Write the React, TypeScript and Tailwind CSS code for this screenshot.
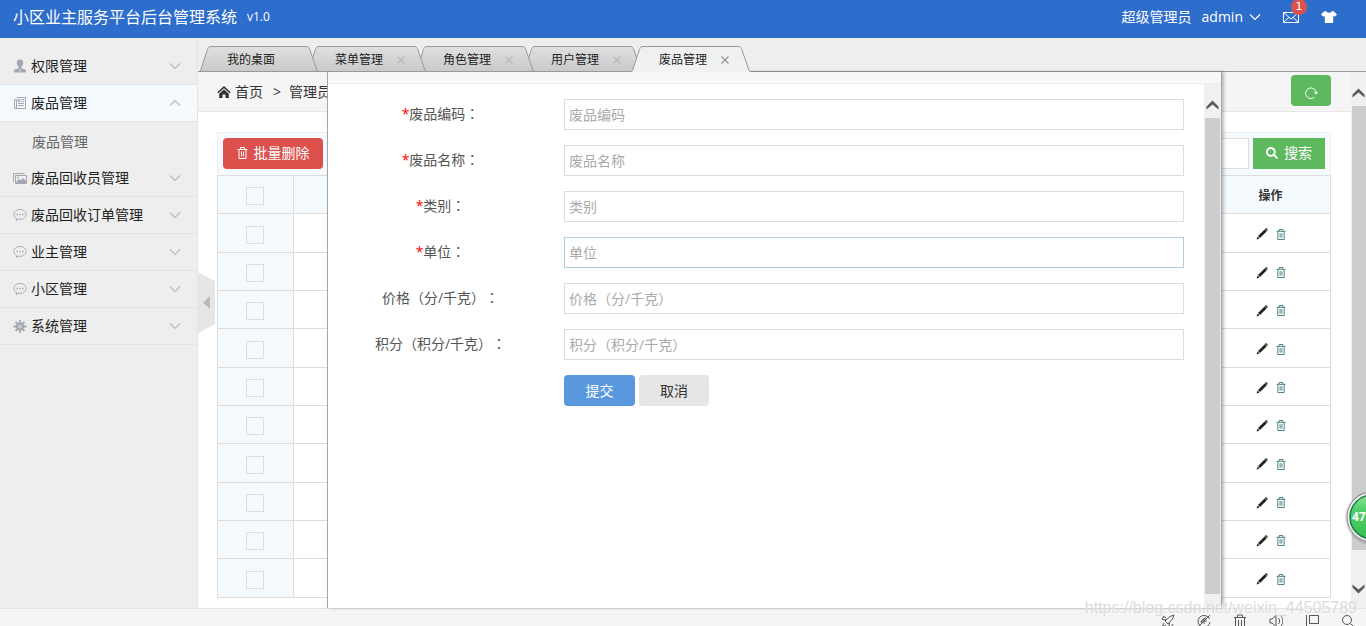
import { useState } from "react";
import type { ReactNode } from "react";
import { FaSearch } from "react-icons/fa";

type IconProps = { className?: string };

const UserIcon = () => (
  <svg viewBox="0 0 14 14" className="w-3.5 h-3.5" fill="#a2a7b0">
    <path d="M7 0.5c-2.3 0-3.3 1.5-3.2 3.4.1 1.500.7 3 1.700 3.900v1.400L2.200 10.200C1.400 10.500 1 11.200 1 12v1.500h12V12c0-.8-.4-1.500-1.200-1.800L8.500 9.200V7.800c1-.9 1.600-2.400 1.700-3.900C10.300 2 9.300.5 7 .5z" />
    <path d="M6.300 10h1.400l-.4 1.200.5 2.300H6.200l.5-2.300z" fill="#d9dbde" />
  </svg>
);

const NewsIcon = () => (
  <svg viewBox="0 0 14 14" className="w-3.5 h-3.5" fill="none" stroke="#a2a7b0">
    <path d="M3.500 1.500h9v11h-11v-9h2v9" />
    <path d="M5 3.500h2v2H5zM8.500 3.500H11M8.500 5.500H11M5 7.500h6M5 9.500h6" />
  </svg>
);

const ImageIcon = () => (
  <svg viewBox="0 0 14 14" className="w-3.5 h-3.5" fill="none" stroke="#a2a7b0">
    <path d="M0.500 11V2.500h11" />
    <path d="M2.500 4.500h11v8h-11z" />
    <path d="M3 12l3-3.500 1.500 1.500L10 7.500l3 3V12z" fill="#a2a7b0" />
    <circle cx="5" cy="6.500" r="0.600" />
  </svg>
);

const CommentIcon = () => (
  <svg viewBox="0 0 14 14" className="w-3.5 h-3.5" fill="none" stroke="#a6aab2">
    <path d="M7 1.500C3.500 1.500.900 3.700.900 6.400c0 1.700 1 3.200 2.600 4.100l-.3 2 2.300-1.300c.5.100 1 .1 1.500.1 3.500 0 6.100-2.200 6.100-4.900S10.500 1.500 7 1.500z" />
    <path d="M3.500 6.500h1.500M6.300 6.500h1.500M9.100 6.500h1.500" strokeWidth="1.400" />
  </svg>
);

const GearIcon = () => (
  <svg viewBox="0 0 14 14" className="w-3.5 h-3.5" fill="none" stroke="#a2a7b0">
    <circle cx="7" cy="7.500" r="3" strokeWidth="2.500" />
    <path d="M7 1v13M.500 7.500h13M2.500 3l9 9M11.500 3l-9 9" strokeWidth="1.800" strokeDasharray="2.600 7.800 2.600" />
    <circle cx="7" cy="7.500" r="0.700" strokeWidth="1" />
  </svg>
);

const Chevron = ({ className }: IconProps) => (
  <svg viewBox="0 0 12 8" className={`w-3 h-2 ${className ?? ""}`} fill="none" stroke="currentColor" strokeWidth="1.200">
    <path d="M1 1.500l5 5 5-5" />
  </svg>
);

const ScrollArrow = ({ className }: IconProps) => (
  <svg viewBox="0 0 13 10" className={`w-[13px] h-2.5 ${className ?? ""}`} fill="#5a5a5a">
    <path d="M6.500 0.500L12.500 6.500V9.500L6.500 4.500 .500 9.500V6.500z" />
  </svg>
);

const TrashIcon = ({ className }: IconProps) => (
  <svg viewBox="0 0 11 12" className={className} fill="none" stroke="currentColor">
    <path d="M0.500 2.500h10M3.500 2.500v-2h4v2M2 3v8.500h7V3M4.500 4.500v5M6.500 4.500v5" />
  </svg>
);

const PencilIcon = () => (
  <svg viewBox="0 0 12 12" className="w-3 h-3" fill="#222">
    <path d="M8.800 1.200L10.800 3.200 4 10 2 8zM9.400.600c.4-.4 1-.4 1.400 0l.6.6c.4.4.4 1 0 1.400l-.3.300-2-2zM1.600 8.500L3.500 10.400.500 11.500z" />
  </svg>
);

const HomeIcon = () => (
  <svg viewBox="0 0 14 12" className="w-3.5 h-3" fill="#333">
    <path d="M7 0L13.700 6.200 12.700 7.300 7 2.200 1.300 7.300.300 6.200z" />
    <path d="M7 3.500l4.800 4.300V12H8.500V8.500h-3V12H2.200V7.800z" />
  </svg>
);

const RefreshIcon = () => (
  <svg viewBox="0 0 14 14" className="w-3.5 h-3.5" fill="none" stroke="#fff">
    <path d="M10.500 11.200A5.300 5.300 0 1 1 12.200 6.500" />
    <path d="M10.300 6.200h3.400L12 8.300z" fill="#fff" strokeWidth="0.500" />
  </svg>
);

const MailIcon = () => (
  <svg viewBox="0 0 16 11" className="w-4 h-[11px]" fill="none" stroke="#fff">
    <path d="M.500.500h15v10H.500zM.500.500L8 7l7.500-6.500M.500 10.500L6 5.300M15.500 10.500L10 5.300" />
  </svg>
);

const ShirtIcon = () => (
  <svg viewBox="0 0 16 12" className="w-4 h-3" fill="#fff">
    <path d="M5 0c.5 1.200 1.600 1.800 3 1.800S10.500 1.200 11 0l2 .400L16 3.500 13.700 5.700 12.200 4.800V12H3.800V4.800L2.300 5.700 0 3.500 3 .400z" />
  </svg>
);

const menus: { name: string; icon: ReactNode; children?: string[] }[] = [
  { name: "权限管理", icon: <UserIcon /> },
  { name: "废品管理", icon: <NewsIcon />, children: ["废品管理"] },
  { name: "废品回收员管理", icon: <ImageIcon /> },
  { name: "废品回收订单管理", icon: <CommentIcon /> },
  { name: "业主管理", icon: <CommentIcon /> },
  { name: "小区管理", icon: <CommentIcon /> },
  { name: "系统管理", icon: <GearIcon /> },
];

const tabs = ["我的桌面", "菜单管理", "角色管理", "用户管理", "废品管理"];

const fields = [
  { id: "code", label: "废品编码", required: true },
  { id: "name", label: "废品名称", required: true },
  { id: "type", label: "类别", required: true },
  { id: "unit", label: "单位", required: true },
  { id: "price", label: "价格（分/千克）", required: false },
  { id: "score", label: "积分（积分/千克）", required: false },
];

const rows = [1, 2, 3, 4, 5, 6, 7, 8, 9, 10];

const statusIcons = [
  "M9 2.500L13 1l-1.500 4L7 10 4 7zM5.500 5.500L2 6l-1-1 2-3M8.500 8.500L8 12l2 1 2-3M3 9l-2 4 4-2M2 2l3 2",
  "M12.500 5A6 6 0 1 0 13 8M1 13L13 1M4 9c0-3 3-5 5-5M7 4v6M4 7h6",
  "M1 3.500h12M4.500 3V1h5v2M2.500 3.500v10h9v-10M5.500 6v6M8.500 6v6",
  "M1 5h2l4-3.500v11L3 9H1zM9.500 4c1.500 2 1.500 4 0 6M12 2c2.500 3 2.500 7 0 10",
  "M4.500 1.500h9v8h-9zM1.500 1v12M1.500 12.500h7",
  "M10.500 6a4.500 4.500 0 1 1-9 0 4.500 4.500 0 0 1 9 0zM9.500 9.500l4 4",
];

function TabShape({ active }: { active: boolean }) {
  return (
    <svg viewBox="0 0 120 26" className="absolute left-0 top-0 w-[120px] h-[26px]">
      <defs>
        <linearGradient id="tab" x1="0" y1="0" x2="0" y2="1">
          <stop offset="0" stopColor="#dfe0df" />
          <stop offset="1" stopColor="#c9c9ca" />
        </linearGradient>
        <linearGradient id="tab-active" x1="0" y1="0" x2="0" y2="1">
          <stop offset="0" stopColor="#eeefee" />
          <stop offset="1" stopColor="#f2f2f3" />
        </linearGradient>
      </defs>
      <path
        d="M0 26C1 25.500 1.500 24.500 2 23L8.500 3.500C9.200 1.500 10 .500 12 .500H107c2 0 3 1 3.800 3L117.500 23c.5 1.500 1 2.500 2.500 3"
        fill={active ? "url(#tab-active)" : "url(#tab)"}
        stroke="#999"
      />
      {!active && <path d="M0 25.500h120" stroke="#999" />}
    </svg>
  );
}

function Header() {
  return (
    <header className="h-[38px] shrink-0 flex items-center justify-between pl-[13px] pr-[29px] pb-1 bg-[#2d6dcc] text-white">
      <div className="flex items-center gap-2.5 pb-px">
        <a href="#" className="text-base leading-6">小区业主服务平台后台管理系统</a>
        <span className="text-xs">v1.0</span>
      </div>
      <div className="flex items-center text-sm">
        <span>超级管理员</span>
        <button className="flex items-center gap-1.5 ml-2.5">
          admin
          <Chevron />
        </button>
        <button aria-label="消息" className="relative ml-[22px]">
          <MailIcon />
          <span className="absolute -top-[13px] left-2 w-4 h-4 rounded-full bg-[#dd514c] font-['DejaVu_Sans',sans-serif] text-[11px] leading-4 text-center">
            1
          </span>
        </button>
        <button aria-label="换肤" className="ml-[22px]">
          <ShirtIcon />
        </button>
      </div>
    </header>
  );
}

function Sidebar({ open, setOpen }: { open: number; setOpen: (i: number) => void }) {
  return (
    <aside className="w-[197px] shrink-0 pt-2.5 bg-[#eee]">
      {menus.map((menu, i) => (
        <div key={menu.name}>
          <button
            onClick={() => setOpen(open === i ? -1 : i)}
            className={`w-full h-[37px] flex items-center gap-1 pl-[13px] pr-4 border-b border-[#e4e4e4] text-sm text-[#222] ${
              open === i ? "bg-[#f5faff]" : ""
            }`}
          >
            {menu.icon}
            <span className="flex-1 text-left">{menu.name}</span>
            <Chevron className={open === i ? "rotate-180 text-[#bbb]" : "text-[#bbb]"} />
          </button>
          {open === i &&
            menu.children?.map((child) => (
              <a key={child} href="#" className="h-[38px] flex items-center pt-0.5 pl-8 text-sm text-[#666]">
                {child}
              </a>
            ))}
        </div>
      ))}
    </aside>
  );
}

function TabBar({ current, setCurrent }: { current: number; setCurrent: (i: number) => void }) {
  return (
    <nav className="relative h-[34px] shrink-0 flex pl-px pt-2 bg-[#eeeef0] text-xs">
      <div className="absolute inset-x-0 bottom-0 border-b border-[#999]" />
      {tabs.map((tab, i) => (
        <div
          key={tab}
          className="relative w-[108px] h-[26px]"
          style={{ zIndex: current === i ? tabs.length + 1 : tabs.length - i }}
        >
          <TabShape active={current === i} />
          <div className="relative h-full flex items-center gap-3.5 pt-px pl-7 text-[#222]">
            <button onClick={() => setCurrent(i)}>{tab}</button>
            {i > 0 && (
              <button aria-label="关闭" className={current === i ? "text-[#999]" : "text-[#b5babd]"}>
                <svg viewBox="0 0 8 8" className="w-2 h-2" stroke="currentColor" strokeWidth="1.400">
                  <path d="M.500.500l7 7M7.500.500l-7 7" />
                </svg>
              </button>
            )}
          </div>
        </div>
      ))}
    </nav>
  );
}

function WasteTable() {
  return (
    <table className="w-full table-fixed border-separate border-spacing-0 border-l border-t border-[#ddd] text-xs text-[#333]">
      <thead>
        <tr className="h-[38px] bg-[#f5faff]">
          <th className="w-[76px] pt-0.5 pr-0.5 border-r border-b border-[#ddd]">
            <input type="checkbox" aria-label="全选" className="block mx-auto w-[18px] h-[18px] appearance-none border border-[#ddd]" />
          </th>
          <th className="border-b border-[#ddd]"></th>
          <th className="w-[120px] pt-0.5 border-r border-b border-[#ddd] font-bold">操作</th>
        </tr>
      </thead>
      <tbody>
        {rows.map((row) => (
          <tr key={row} className="h-[38px] nth-[3n+1]:h-[39px]">
            <td className="pt-[3px] pr-0.5 border-r border-b border-[#ddd] bg-[#f5faff]">
              <input type="checkbox" aria-label="选择" className="block mx-auto w-[18px] h-[18px] appearance-none border border-[#ddd]" />
            </td>
            <td className="border-b border-[#ddd]"></td>
            <td className="pt-0.5 border-r border-b border-[#ddd]">
              <div className="flex items-center justify-center gap-2">
                <button aria-label="编辑"><PencilIcon /></button>
                <button aria-label="删除"><TrashIcon className="w-2.5 h-[11px] text-[#3d7777]" /></button>
              </div>
            </td>
          </tr>
        ))}
      </tbody>
    </table>
  );
}

function WasteDialog() {
  return (
    <div role="dialog" className="absolute inset-y-0 left-[129px] right-36 flex flex-col bg-white border-x border-[#a6a6a6] shadow-[2px_0_3px_rgba(0,0,0,0.25)]">
      <div className="h-3 shrink-0 bg-[#f8f8f8] border-b border-[#eee]" />
      <div className="flex-1 min-h-0 flex">
        <form className="flex-1 flex flex-col gap-[15px] px-5 pt-[15px] text-sm" onSubmit={(e) => e.preventDefault()}>
          {fields.map((field) => (
            <div key={field.id} className="flex">
              <label htmlFor={field.id} className="w-[216px] shrink-0 pr-[31px] leading-7 text-center text-[#555]">
                {field.required && <span className="text-[#f00]">*</span>}
                {field.label}
                <span className="font-['Noto_Sans_CJK_TC',sans-serif]">：</span>
              </label>
              <input
                id={field.id}
                placeholder={field.label}
                className={`flex-1 min-w-0 h-[31px] px-1 border outline-none placeholder:text-[#aaa] ${
                  field.id === "unit" ? "border-[#b0cfdd]" : "border-[#ddd]"
                }`}
              />
            </div>
          ))}
          <div className="flex gap-1 pl-[216px]">
            <button type="submit" className="w-[71px] h-[31px] rounded bg-[#5a98de] text-white">提交</button>
            <button type="button" className="w-[70px] h-[31px] rounded bg-[#e6e6e6] text-[#333]">取消</button>
          </div>
        </form>
        <div className="w-[17px] flex flex-col items-center gap-2 pt-4 pb-3.5 bg-[#f0f0f0]">
          <ScrollArrow />
          <div className="flex-1 w-[15px] bg-[#cdcdcd]" />
        </div>
      </div>
    </div>
  );
}

function SpeedBall() {
  return (
    <svg viewBox="0 0 24 60" className="absolute right-0 top-[487px] w-6 h-[60px]">
      <defs>
        <linearGradient id="ball" x1="0" y1="0" x2="0" y2="1">
          <stop offset="0" stopColor="#8be29a" />
          <stop offset="0.350" stopColor="#4fcf68" />
          <stop offset="1" stopColor="#35c04f" />
        </linearGradient>
      </defs>
      <circle cx="30" cy="31" r="27" fill="#000" opacity="0.120" />
      <circle cx="30" cy="30" r="25" fill="#eee" stroke="#888" />
      <circle cx="30" cy="30" r="22" fill="url(#ball)" stroke="#1d7d4d" strokeWidth="1.500" />
      <text x="10" y="34" fontSize="12" fontWeight="bold" fill="#fff" fontFamily="Open Sans, sans-serif">47</text>
    </svg>
  );
}

export default function App() {
  const [open, setOpen] = useState(1);
  const [current, setCurrent] = useState(4);

  return (
    <div className="relative h-screen flex flex-col overflow-hidden bg-white font-['Open_Sans','Noto_Sans_CJK_SC',sans-serif] [text-spacing-trim:space-all]">
      <Header />
      <div className="flex-1 min-h-0 flex">
        <Sidebar open={open} setOpen={setOpen} />

        <main className="relative flex-1 min-w-0 flex flex-col border-l border-[#e4e4e4]">
          <TabBar current={current} setCurrent={setCurrent} />
          <div className="relative flex-1 min-h-0 flex">
            <div className="flex-1 min-w-0">
              <div className="h-10 flex items-center justify-between pl-[19px] pr-5 bg-[#f5f5f5] border-b border-[#e5e5e5] text-sm text-[#333]">
                <div className="flex items-center">
                  <HomeIcon />
                  <a href="#" className="ml-1">首页</a>
                  <span className="ml-2.5 mr-2">&gt;</span>
                  <span>管理员管理</span>
                </div>
                <button aria-label="刷新" className="w-10 h-[31px] self-start mt-[3px] flex items-center justify-center rounded bg-[#5eb95e] pt-1">
                  <RefreshIcon />
                </button>
              </div>

              <div className="pl-[19px] pr-5 pt-5">
                <div className="h-[43px] flex items-center justify-between px-[5px] pb-0.5 bg-[#f5faff] border border-b-0 border-[#eee] text-sm text-white">
                  <button className="w-[100px] h-[31px] flex items-center justify-center gap-1.5 rounded bg-[#dd514c]">
                    <TrashIcon className="w-[11px] h-3" />
                    批量删除
                  </button>
                  <div className="flex gap-1">
                    <input aria-label="关键字" className="w-[200px] h-[31px] px-1 border border-[#ddd] bg-white text-[#333]" />
                    <button className="w-[72px] h-[31px] flex items-center justify-center gap-1.5 bg-[#5eb95e]">
                      <FaSearch className="w-3 h-3" />
                      搜索
                    </button>
                  </div>
                </div>
                <WasteTable />
              </div>
            </div>

            {/* page scroll bar */}
            <div className="w-[15px] flex flex-col items-center gap-2 pt-4 pb-3.5 bg-[#f0f0f0]">
              <ScrollArrow />
              <div className="flex-1 w-3.5 bg-[#cdcdcd]" />
              <div className="h-[18px]" />
              <ScrollArrow className="rotate-180" />
            </div>

            <WasteDialog />
          </div>

          <button aria-label="收起菜单" className="absolute -left-px top-[234px]">
            <svg viewBox="0 0 18 62" className="w-[18px] h-[62px]">
              <path d="M0 0L18 9v43L0 62z" fill="#e6e6e6" />
              <path d="M13 24v13l-7-6.500z" fill="#bbb" />
            </svg>
          </button>
        </main>
      </div>

      <footer className="h-[18px] shrink-0 flex justify-end gap-[22px] pt-[5px] pr-[11px] overflow-hidden bg-[#f5f5f5] border-t border-[#e4e4e4]">
        {statusIcons.map((d) => (
          <svg key={d} viewBox="0 0 14 14" className="w-3.5 h-3.5 shrink-0" fill="none" stroke="#555">
            <path d={d} />
          </svg>
        ))}
      </footer>

      <span className="absolute right-[9px] bottom-1.5 font-['Liberation_Sans',sans-serif] text-base leading-6 text-[#ccc]/70 [text-shadow:0_0_2px_white]">
        https://blog.csdn.net/weixin_44505789
      </span>
      <SpeedBall />
    </div>
  );
}
